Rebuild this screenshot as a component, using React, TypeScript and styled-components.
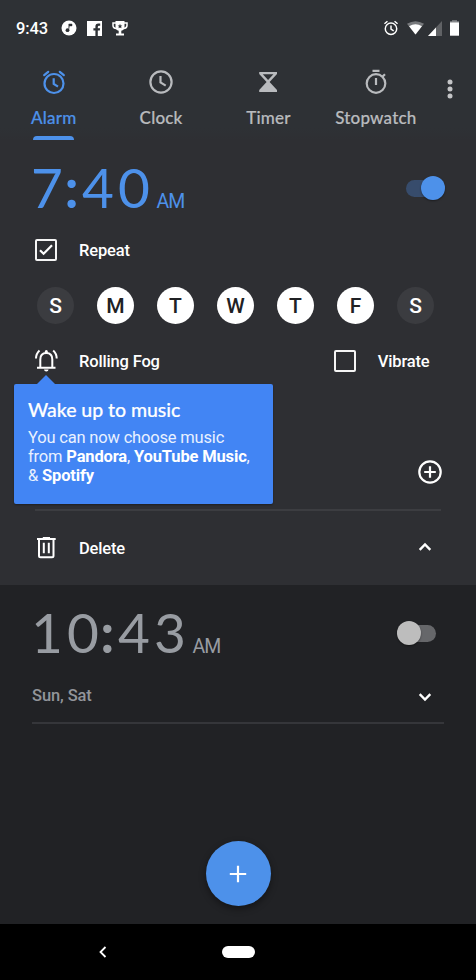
import React from "react";
import styled, { createGlobalStyle } from "styled-components";

const Global = createGlobalStyle`
  * { box-sizing: border-box; }
  body { margin: 0; background: #212225; }
`;

const BLUE = "#4d91ea";

const Screen = styled.div`
  width: 476px;
  height: 980px;
  display: flex;
  flex-direction: column;
  background: #212225;
  color: #fff;
  font-family: Roboto, "Liberation Sans", sans-serif;
  overflow: hidden;
`;

const Glyph = styled.svg`
  display: block;
  flex: none;
  overflow: visible;
`;

const StatusBar = styled.header`
  height: 56px;
  flex: none;
  padding: 0 14px 0 16px;
  display: flex;
  align-items: center;
  justify-content: space-between;
  background: #2e3135;
`;

const StatusGroup = styled.div<{ $gap: number }>`
  display: flex;
  align-items: center;
  gap: ${(p) => p.$gap}px;
`;

const StatusTime = styled.span`
  width: 35px;
  white-space: nowrap;
  font-size: 16.5px;
  font-weight: 500;
  letter-spacing: -0.1px;
  line-height: 20px;
  padding-top: 1px;
`;

const AlarmStatus = styled.span`
  margin-right: 4px;
`;

const TabBar = styled.nav`
  height: 84px;
  flex: none;
  display: flex;
  background: linear-gradient(#2e3135 0 72px, #2e2f33 84px);
`;

const Tab = styled.div<{ $active?: boolean }>`
  width: 107.4px;
  flex: none;
  display: flex;
  flex-direction: column;
  align-items: center;
  padding-top: 12px;
  color: ${(p) => (p.$active ? BLUE : "#b9bbbe")};
`;

const TabLabel = styled.span`
  margin-top: 11px;
  height: 22px;
  font-family: Lato, sans-serif;
  font-weight: 500;
  font-size: 17px;
  line-height: 22px;
  letter-spacing: 0.2px;
  white-space: nowrap;
  -webkit-text-stroke: 0.2px currentColor;
`;

const TabMark = styled.i`
  width: 41px;
  height: 4px;
  margin-top: 7px;
  border-radius: 4px 4px 0 0;
  background: ${BLUE};
`;

const Overflow = styled.div`
  width: 41.5px;
  display: flex;
  justify-content: center;
  padding-top: 23px;
`;

const ActiveAlarm = styled.section`
  position: relative;
  height: 445px;
  flex: none;
  background: #2e2f33;
  display: flex;
  flex-direction: column;
`;

const IdleAlarm = styled.section`
  height: 339px;
  flex: none;
  display: flex;
  flex-direction: column;
  background: #212225;
`;

const TimeRow = styled.div<{ $color: string; $right: number }>`
  height: 96px;
  flex: none;
  display: flex;
  align-items: center;
  justify-content: space-between;
  padding: 0 ${(p) => p.$right}px 0 31px;
  color: ${(p) => p.$color};
`;

const TimeText = styled.div`
  display: flex;
  align-items: baseline;
  padding-bottom: 2px;
`;

const Digits = styled.span<{ $width: number }>`
  width: ${(p) => p.$width}px;
  font-family: Lato, sans-serif;
  font-size: 55px;
  line-height: 60px;
  letter-spacing: 4px;
  white-space: nowrap;
`;

const HourEnd = styled.span`
  letter-spacing: 1.5px;
`;

const Colon = styled.span`
  font-weight: 700;
  letter-spacing: 3.5px;
`;

const Meridiem = styled.span`
  font-size: 19.5px;
  line-height: 24px;
  letter-spacing: -1px;
`;

const Track = styled.div<{ $on?: boolean }>`
  width: 39px;
  height: 17px;
  border-radius: 9px;
  display: flex;
  align-items: center;
  justify-content: ${(p) => (p.$on ? "flex-end" : "flex-start")};
  background: ${(p) => (p.$on ? "#374c6c" : "#66676a")};
`;

const Knob = styled.i<{ $on?: boolean }>`
  width: 24px;
  height: 24px;
  flex: none;
  border-radius: 50%;
  background: ${(p) => (p.$on ? BLUE : "#bdbdbd")};
  box-shadow: 0 1px 2px rgba(0, 0, 0, 0.4);
`;

const Row = styled.div<{ $height: number; $right?: number; $top?: number }>`
  height: ${(p) => p.$height}px;
  flex: none;
  display: flex;
  align-items: center;
  padding: ${(p) => p.$top ?? 0}px ${(p) => p.$right ?? 43}px 0 34px;
`;

const Label = styled.span<{ $gap: number }>`
  margin-left: ${(p) => p.$gap}px;
  padding-top: 2px;
  font-size: 16.5px;
  font-weight: 500;
  line-height: 22px;
  letter-spacing: -0.17px;
  white-space: nowrap;
`;

const Spacer = styled.span`
  flex: 1;
`;

const Box = styled.div`
  width: 22px;
  height: 22px;
  margin-left: 1px;
  flex: none;
  border: 2px solid #f5f5f5;
  border-radius: 2px;
  display: flex;
  align-items: center;
  justify-content: center;
`;

const Days = styled.div`
  height: 68px;
  flex: none;
  display: flex;
  align-items: center;
  justify-content: space-between;
  padding: 15px 42px 0 37px;
`;

const Day = styled.div<{ $on: boolean }>`
  width: 37px;
  height: 37px;
  border-radius: 50%;
  display: flex;
  align-items: center;
  justify-content: center;
  font-size: 21px;
  font-weight: 500;
  background: ${(p) => (p.$on ? "#fff" : "#3b3c40")};
  color: ${(p) => (p.$on ? "#202124" : "#fff")};
`;

const Divider = styled.hr<{ $left: number; $right: number; $color: string }>`
  height: 2px;
  flex: none;
  margin: 0 ${(p) => p.$right}px 0 ${(p) => p.$left}px;
  border: 0;
  background: ${(p) => p.$color};
`;

const Tooltip = styled.aside`
  position: absolute;
  left: 14px;
  top: 244px;
  width: 259px;
  height: 119.5px;
  padding: 13px 14px;
  border-radius: 2px;
  background: #4285f4;
  box-shadow: 0 1px 2px rgba(0, 0, 0, 0.35);
  &::before {
    content: "";
    position: absolute;
    left: 23px;
    top: -9px;
    border: solid transparent;
    border-width: 0 9.5px 9.5px;
    border-bottom-color: #4285f4;
  }
`;

const TipTitle = styled.h2`
  margin: 0 0 5px;
  font-family: Lato, sans-serif;
  font-size: 19.5px;
  font-weight: 500;
  line-height: 26px;
  letter-spacing: -0.05px;
  -webkit-text-stroke: 0.2px currentColor;
`;

const TipText = styled.p`
  margin: 0;
  font-size: 16.5px;
  line-height: 19px;
  letter-spacing: -0.18px;
  color: #e9f1ff;
  white-space: nowrap;
  b { color: #fff; letter-spacing: -0.15px; }
`;

const Repeats = styled.span`
  padding-top: 1px;
  font-size: 16.5px;
  font-weight: 500;
  line-height: 22px;
  letter-spacing: -0.1px;
  color: #92959a;
`;

const SummaryRow = styled.div`
  height: 41px;
  flex: none;
  display: flex;
  align-items: center;
  justify-content: space-between;
  padding: 0 43px 12px 32px;
`;

const FabArea = styled.div`
  margin-top: 117px;
  display: flex;
  justify-content: center;
`;

const Fab = styled.div`
  width: 65px;
  height: 65px;
  border-radius: 50%;
  display: flex;
  align-items: center;
  justify-content: center;
  background: ${BLUE};
  box-shadow: 0 3px 7px rgba(0, 0, 0, 0.4);
`;

const NavBar = styled.footer`
  height: 56px;
  flex: none;
  display: grid;
  grid-template-columns: 206px 64px 206px;
  align-items: center;
  justify-items: center;
  background: #000;
`;

const HomePill = styled.i`
  width: 33px;
  height: 12px;
  border-radius: 6px;
  background: #fff;
`;

const ClockGlyph = () => (
  <Glyph width="28" height="28" viewBox="0 0 28 28" fill="none" stroke="currentColor" strokeWidth="2.2">
    <circle cx="14" cy="14" r="10.6" />
    <path d="M13.5 8V14.5L18.7 17.6" />
  </Glyph>
);

const HourglassGlyph = () => (
  <Glyph width="28" height="28" viewBox="0 0 28 28">
    <path fill="currentColor" fillRule="evenodd" d="M5.2 4H23V6L15.6 14 23 22V24H5.2V22L12.6 14 5.2 6ZM8.8 6.2 14.1 12 19.4 6.2Z" />
  </Glyph>
);

const StopwatchGlyph = () => (
  <Glyph width="28" height="28" viewBox="0 0 28 28" fill="none" stroke="currentColor" strokeWidth="2.2">
    <circle cx="14" cy="15.5" r="9.3" />
    <path d="M10.5 2.8H17.5M14 10V17M20.4 8.8 23 6.2" />
  </Glyph>
);

const Chevron = ({ d }: { d: string }) => (
  <Glyph width="16" height="16" viewBox="0 0 16 16" fill="none" stroke="#fff" strokeWidth="2.4">
    <path d={d} />
  </Glyph>
);

const DAYS: [string, boolean][] = [
  ["S", false], ["M", true], ["T", true], ["W", true], ["T", true], ["F", true], ["S", false],
];

const Switch = ({ on }: { on?: boolean }) => (
  <Track $on={on}><Knob $on={on} /></Track>
);

const Time = ({ hour, minute, width }: { hour: string; minute: string; width: number }) => (
  <TimeText>
    <Digits $width={width}>{hour.slice(0, -1)}<HourEnd>{hour.slice(-1)}</HourEnd><Colon>:</Colon>{minute}</Digits>
    <Meridiem>AM</Meridiem>
  </TimeText>
);

export default function App() {
  return (
    <>
      <Global />
      <Screen>
        <StatusBar>
          <StatusGroup $gap={10}>
            <StatusTime>9:43</StatusTime>
            <Glyph width="16" height="16" viewBox="0 0 16 16">
              <circle cx="8" cy="8" r="7.5" fill="#fff" />
              <circle cx="6.5" cy="10.2" r="1.9" fill="#2e3135" />
              <path d="M7.8 10.2V4H11V5.9H8.6" fill="#2e3135" stroke="#2e3135" strokeWidth=".5" />
            </Glyph>
            <Glyph width="15" height="15" viewBox="0 0 15 15">
              <path fill="#fff" d="M0 0H15V15H10.8V9.5H12.8L13.1 7.2H10.8V5.9Q10.8 4.7 12 4.7H13.2V2.5H11.3Q8.4 2.5 8.4 5.4V7.2H6.4V9.5H8.4V15H0Z" />
            </Glyph>
            <Glyph width="16" height="15" viewBox="0 0 16 15">
              <path d="M4 2H1V4.5Q1 7.3 4.5 7.5M12 2H15V4.5Q15 7.3 11.5 7.5" fill="none" stroke="#fff" strokeWidth="1.5" />
              <path fill="#fff" d="M3.5 0H12.5V6Q12.5 9 9.3 9.7V12.5H12V14.5H4V12.5H6.7V9.7Q3.5 9 3.5 6Z" />
              <path fill="#2e3135" d="m8 2.8.7 1.6 1.7.1-1.3 1.1.4 1.7L8 6.4l-1.5.9.4-1.7-1.3-1.1 1.7-.1Z" />
            </Glyph>
          </StatusGroup>
          <StatusGroup $gap={4}>
            <AlarmStatus>
              <Glyph width="16" height="16" viewBox="0 0 24 24" fill="none" stroke="#fff" strokeWidth="2.2">
                <circle cx="12" cy="13.2" r="8.6" />
                <path d="M12 8.2V13.5L16 16.2M2.2 5.6 6.7 1.8M21.8 5.6 17.3 1.8" />
              </Glyph>
            </AlarmStatus>
            <Glyph width="17" height="16" viewBox="0 0 18 16">
              <path fill="#77797c" d="M0 3.6Q9-2 18 3.6L9 15Z" />
              <path fill="#fff" d="M2.2 6.2Q9 1.8 15.8 6.2L9 15Z" />
            </Glyph>
            <Glyph width="14" height="15" viewBox="0 0 14 15">
              <path fill="#606265" d="M14 0V15H0Z" />
              <path fill="#fff" d="M8 6.4V15H0Z" />
            </Glyph>
            <Glyph width="16" height="16" viewBox="0 0 16 16">
              <path fill="#85878a" d="M6 .3H11V1.3H13V3.3H4V1.3H6Z" />
              <path fill="#fff" d="M4 2.5H13V15.7H4Z" />
            </Glyph>
          </StatusGroup>
        </StatusBar>

        <TabBar>
          <Tab $active>
            <Glyph width="28" height="28" viewBox="0 0 28 28" fill="none" stroke="currentColor" strokeWidth="2.2">
              <circle cx="14" cy="15.5" r="9.5" />
              <path d="M13.7 10.2V15.8L18 18.7" />
              <path d="M4.2 7.2 8.2 3.8M23.8 7.2 19.8 3.8" strokeLinecap="round" />
            </Glyph>
            <TabLabel>Alarm</TabLabel>
            <TabMark />
          </Tab>
          <Tab><ClockGlyph /><TabLabel>Clock</TabLabel></Tab>
          <Tab><HourglassGlyph /><TabLabel>Timer</TabLabel></Tab>
          <Tab><StopwatchGlyph /><TabLabel>Stopwatch</TabLabel></Tab>
          <Overflow>
            <Glyph width="6" height="20" viewBox="0 0 6 20" fill="#c4c5c7">
              <circle cx="3" cy="3" r="2.5" /><circle cx="3" cy="10" r="2.5" /><circle cx="3" cy="17" r="2.5" />
            </Glyph>
          </Overflow>
        </TabBar>

        <ActiveAlarm>
          <TimeRow $color={BLUE} $right={31.5}>
            <Time hour="7" minute="40" width={125.5} />
            <Switch on />
          </TimeRow>
          <Row $height={28}>
            <Box>
              <Glyph width="14" height="12" viewBox="0 0 14 12" fill="none" stroke="#fff" strokeWidth="2.2">
                <path d="M1 6.2 4.6 9.8 13 1.2" />
              </Glyph>
            </Box>
            <Label $gap={22}>Repeat</Label>
          </Row>
          <Days>
            {DAYS.map(([name, on], i) => <Day key={i} $on={on}>{name}</Day>)}
          </Days>
          <Row $height={58} $right={46.5}>
            <Glyph width="24" height="24" viewBox="0 0 24 24" fill="none" stroke="#fff" strokeWidth="2">
              <path d="M3 18.8H21.5M6.3 18.8V10.5Q6.3 4 12.3 4T18.3 10.5V18.8M2 9.5Q2 4.8 5.5 1.5M22.7 9.5Q22.7 4.8 19.2 1.5" />
              <path d="M10.8 4V2.6Q10.8 1.1 12.3 1.1T13.8 2.6V4ZM10 20.6H14.6Q14.4 22.6 12.3 22.6T10 20.6Z" fill="#fff" stroke="none" />
            </Glyph>
            <Label $gap={21}>Rolling Fog</Label>
            <Spacer />
            <Box />
            <Label $gap={22}>Vibrate</Label>
          </Row>
          <Row $height={119} $right={34.5} $top={45}>
            <Spacer />
            <Glyph width="24" height="24" viewBox="0 0 24 24" fill="none" stroke="#fff" strokeWidth="2.2">
              <circle cx="12" cy="12" r="10.7" /><path d="M12 6.2V17.8M6.2 12H17.8" />
            </Glyph>
          </Row>
          <Divider $left={35} $right={35} $color="#3c3d41" />
          <Row $height={74}>
            <Glyph width="24" height="24" viewBox="0 0 24 24" fill="none" stroke="#fff" strokeWidth="2">
              <path d="M3 2.9H21.7M8.8 2H16M5 2.9V19.8Q5 21.3 6.5 21.3H18Q19.5 21.3 19.5 19.8V2.9M9.8 6.8V17.3M14.8 6.8V17.3" />
            </Glyph>
            <Label $gap={21}>Delete</Label>
            <Spacer />
            <Chevron d="M2.7 9.8 8 4.5 13.3 9.8" />
          </Row>
          <Tooltip>
            <TipTitle>Wake up to music</TipTitle>
            <TipText>
              You can now choose music<br />
              from <b>Pandora</b>, <b>YouTube Music</b>,<br />
              &amp; <b>Spotify</b>
            </TipText>
          </Tooltip>
        </ActiveAlarm>

        <IdleAlarm>
          <TimeRow $color="#989ca2" $right={40}>
            <Time hour="10" minute="43" width={161.5} />
            <Switch />
          </TimeRow>
          <SummaryRow>
            <Repeats>Sun, Sat</Repeats>
            <Chevron d="M2.7 6.2 8 11.5 13.3 6.2" />
          </SummaryRow>
          <Divider $left={32} $right={32} $color="#35363a" />
          <FabArea>
            <Fab>
              <Glyph width="18" height="18" viewBox="0 0 18 18" fill="none" stroke="#fff" strokeWidth="2.2">
                <path d="M9 .8V17.2M.8 9H17.2" />
              </Glyph>
            </Fab>
          </FabArea>
        </IdleAlarm>

        <NavBar>
          <Glyph width="8" height="12" viewBox="0 0 8 12" fill="none" stroke="#fff" strokeWidth="1.8">
            <path d="M6.5 1 1.5 6 6.5 11" />
          </Glyph>
          <HomePill />
        </NavBar>
      </Screen>
    </>
  );
}
